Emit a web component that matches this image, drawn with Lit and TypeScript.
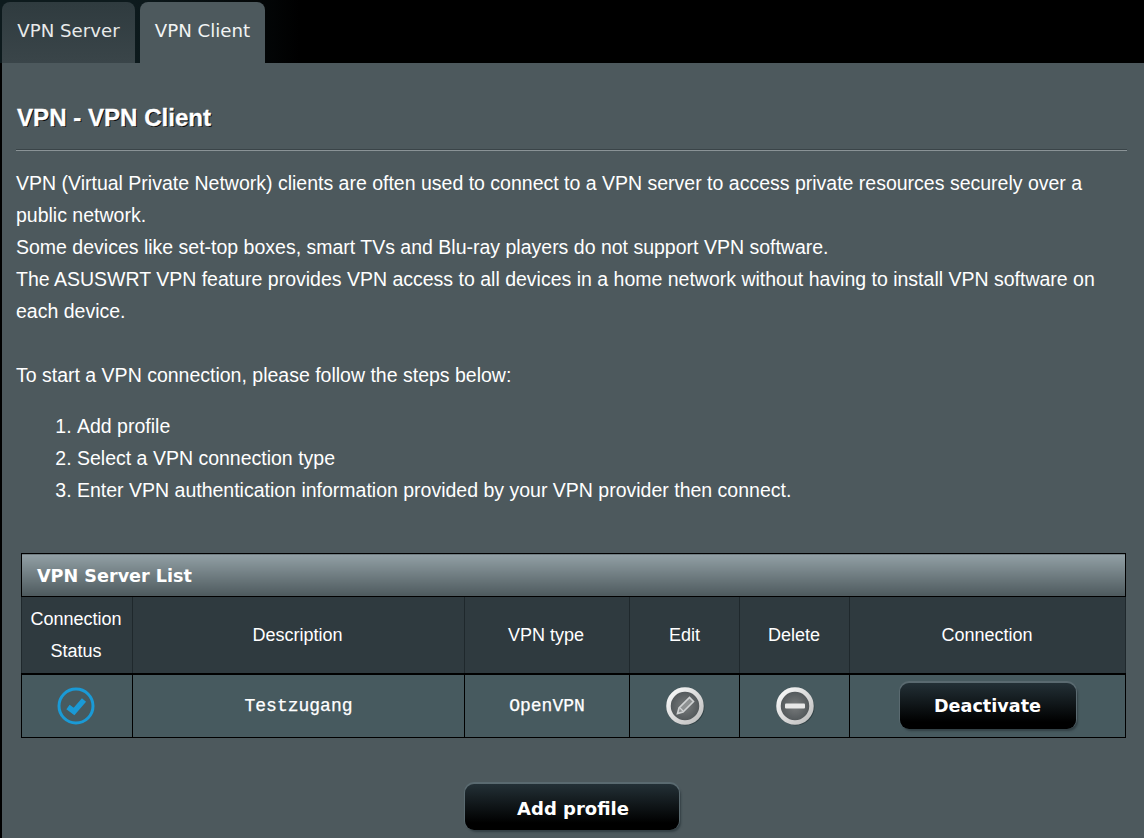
import { LitElement, css, html } from "lit";
import { customElement } from "lit/decorators.js";

@customElement("app-root")
export class AppRoot extends LitElement {
  render() {
    return html`
      <div class="tabs">
        <div class="tab">VPN Server</div>
        <div class="tab active">VPN Client</div>
      </div>
      <div class="panel">
        <h1>VPN - VPN Client</h1>
        <div class="rule"></div>
        <p class="intro">
          VPN (Virtual Private Network) clients are often used to connect to a VPN server to access private resources securely over a public network.<br />
          Some devices like set-top boxes, smart TVs and Blu-ray players do not support VPN software.<br />
          The ASUSWRT VPN feature provides VPN access to all devices in a home network without having to install VPN software on each device.<br /><br />
          To start a VPN connection, please follow the steps below:
        </p>
        <ol>
          <li>Add profile</li>
          <li>Select a VPN connection type</li>
          <li>Enter VPN authentication information provided by your VPN provider then connect.</li>
        </ol>
        <table>
          <colgroup>
            <col style="width:111px" />
            <col style="width:332px" />
            <col style="width:165px" />
            <col style="width:110px" />
            <col style="width:110px" />
            <col />
          </colgroup>
          <thead>
            <tr><th class="caption" colspan="6">VPN Server List</th></tr>
            <tr class="heads">
              <th>Connection<br />Status</th>
              <th>Description</th>
              <th>VPN type</th>
              <th>Edit</th>
              <th>Delete</th>
              <th>Connection</th>
            </tr>
          </thead>
          <tbody>
            <tr>
              <td class="status">
                <svg class="icon" width="40" height="40" viewBox="0 0 40 40">
                  <circle cx="20" cy="20" r="17" fill="none" stroke="#1a9ad6" stroke-width="3" />
                  <path d="M12 21l6 4.500L28 14" fill="none" stroke="#1a9ad6" stroke-width="5.500" />
                </svg>
              </td>
              <td class="mono">Testzugang</td>
              <td class="mono">OpenVPN</td>
              <td>
                <svg class="icon" width="42" height="42" viewBox="0 0 42 42">
                  <defs>
                    <linearGradient id="ring" x1="0" y1="0" x2="1" y2="1">
                      <stop offset="0" stop-color="#fafafa" />
                      <stop offset="1" stop-color="#bdbdbd" />
                    </linearGradient>
                    <radialGradient id="face" cx="0.5" cy="0.5" r="0.55">
                      <stop offset="0" stop-color="#787b7c" />
                      <stop offset="1" stop-color="#4a5053" />
                    </radialGradient>
                  </defs>
                  <circle cx="22" cy="22" r="18.500" fill="#263236" opacity="0.65" />
                  <circle cx="21" cy="21" r="16.500" fill="url(#face)" stroke="url(#ring)" stroke-width="4.500" />
                  <path d="M13.500 28.500l1.500-5.500L25.500 12.500l4 4L19 27z" fill="#8f9293" stroke="#d0d2d3" stroke-width="1.600" />
                  <path d="M16 23l3 3" stroke="#d0d2d3" stroke-width="1.200" />
                </svg>
              </td>
              <td>
                <svg class="icon" width="42" height="42" viewBox="0 0 42 42">
                  <circle cx="22" cy="22" r="18.500" fill="#263236" opacity="0.65" />
                  <circle cx="21" cy="21" r="16.500" fill="url(#face)" stroke="url(#ring)" stroke-width="4.500" />
                  <rect x="11" y="18.500" width="20" height="5" rx="1" fill="#e8e8e8" />
                </svg>
              </td>
              <td><button class="btn small">Deactivate</button></td>
            </tr>
          </tbody>
        </table>
        <div class="actions"><button class="btn wide">Add profile</button></div>
      </div>
    `;
  }

  static styles = css`
    :host {
      display: block;
      height: 838px;
      overflow: hidden;
      background: #000;
      font-family: "Liberation Sans", Arial, sans-serif;
      color: #fff;
    }

    .tabs {
      display: flex;
      gap: 5px;
      height: 61px;
      padding: 2px 0 0 2px;
      background: linear-gradient(90deg, #0d1a1d 0, #0d1a1d 135px, #000 300px);
    }

    .tab {
      width: 133px;
      box-sizing: border-box;
      padding-top: 19px;
      text-align: center;
      font-family: "DejaVu Sans", Verdana, sans-serif;
      font-size: 18.200px;
      line-height: 20px;
      color: #e8eaea;
      border-radius: 8px 8px 0 0;
      background: linear-gradient(#2f3b3f, #3a4549);
    }

    .tab.active {
      width: 125px;
      background: #4d595d;
      color: #f2f4f4;
    }

    .panel {
      margin-left: 2px;
      height: 775px;
      padding: 0 17px 0 14px;
      box-sizing: border-box;
      background: #4d595d;
    }

    h1 {
      margin: 0;
      padding: 39px 0 0 1px;
      font-size: 24.100px;
      line-height: 32px;
      font-weight: bold;
      text-shadow: 1px 1px 0 #000;
      -webkit-text-stroke: 0.3px #fff;
    }

    .rule {
      height: 1px;
      margin-top: 16px;
      background: #8a9396;
      box-shadow: 0 -1px 0 #3a4448;
    }

    .intro {
      margin: 16px 0 0;
      font-size: 19.500px;
      line-height: 32px;
    }

    ol {
      margin: 19px 0 0;
      padding-left: 61px;
      font-size: 19.500px;
      line-height: 32px;
    }

    table {
      width: 1105px;
      margin: 47px 0 0 5px;
      border-collapse: collapse;
      table-layout: fixed;
      font-size: 18px;
    }

    th,
    td {
      border: 1px solid #000;
      padding: 0;
      text-align: center;
    }

    th.caption {
      height: 43px;
      padding: 1px 0 0 15px;
      box-sizing: border-box;
      text-align: left;
      font-family: "DejaVu Sans", Verdana, sans-serif;
      font-size: 17.600px;
      font-weight: bold;
      background: linear-gradient(#92a0a5, #4d595d);
    }

    .heads th {
      height: 76px;
      padding-right: 2px;
      font-weight: normal;
      line-height: 32px;
      background: #2f3a3f;
      border-color: #1f282c;
      border-bottom: 2px solid #000;
    }

    .heads th:nth-child(4) {
      padding-right: 0;
    }

    .heads th:nth-child(n + 5) {
      padding-right: 1px;
    }

    tbody td {
      height: 62px;
      background: #475a5f;
    }

    .status {
      padding-right: 2px;
    }

    .icon {
      display: block;
      margin: 0 auto;
      filter: blur(0.4px);
    }

    .mono {
      font-family: "Liberation Mono", "Courier New", monospace;
      font-size: 18px;
      -webkit-text-stroke: 0.25px #fff;
    }

    .btn {
      height: 46px;
      padding: 0;
      border: 0;
      border-radius: 9px;
      color: #fff;
      font-family: "DejaVu Sans", Verdana, sans-serif;
      font-size: 17.600px;
      font-weight: bold;
      background: linear-gradient(#233036, #000 85%);
      box-shadow: 0 -1px 0 1px #5a6a70, 2px 2px 2px rgba(45, 58, 62, 0.8);
    }

    .small {
      width: 176px;
    }

    .wide {
      width: 214px;
      padding: 2px 0 0 3px;
      font-size: 18px;
    }

    .actions {
      margin-top: 46px;
      display: flex;
      justify-content: center;
    }
  `;
}
